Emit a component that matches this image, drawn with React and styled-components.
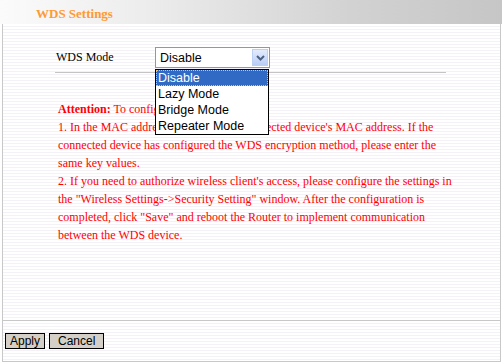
import React from "react";
import styled, { createGlobalStyle } from "styled-components";

const GlobalStyle = createGlobalStyle`
  html, body {
    margin: 0;
    padding: 0;
    background: #ffffff;
  }
`;

const Page = styled.div`
  width: 502px;
  height: 363px;
  display: flex;
  flex-direction: column;
  font-family: "Liberation Serif", "Times New Roman", serif;
  position: relative;
  overflow: hidden;
`;

const Header = styled.div`
  height: 24px;
  flex: none;
  display: flex;
  align-items: center;
  padding-left: 36px;
  background: linear-gradient(to right, #fbfbfb 0%, #ececec 30%, #d2d2d2 70%, #c6c6c6 100%);
`;

const Title = styled.h1`
  margin: 0;
  font-size: 13px;
  font-weight: bold;
  color: #ff9a33;
  padding-top: 3px;
`;

const Panel = styled.div`
  flex: 1;
  margin: 0 1px 1px 2px;
  border-left: 1px solid #c8c8c8;
  border-right: 1px solid #c8c8c8;
  border-bottom: 1px solid #c8c8c8;
  display: flex;
  flex-direction: column;
  background: repeating-linear-gradient(to bottom, #ffffff 0 2px, #f4f2f6 2px 3px);
`;

const Content = styled.div`
  flex: 1;
  padding: 23px 0 0 52px;
`;

const Row = styled.div`
  width: 391px;
  height: 25px;
  display: flex;
  align-items: flex-start;
  border-bottom: 1px solid #c4c4c4;
`;

const Label = styled.span`
  width: 99px;
  font-size: 12px;
  color: #000;
  line-height: 21px;
  padding-left: 1px;
`;

const SelectWrap = styled.div`
  position: relative;
`;

const SelectBox = styled.div`
  width: 109px;
  height: 19px;
  border: 1px solid #7f9db9;
  background: #fff;
  display: flex;
  align-items: center;
  justify-content: space-between;
  font-family: "Liberation Sans", Arial, sans-serif;
  font-size: 12.5px;
  color: #000;
  padding-left: 4px;
  box-sizing: content-box;
`;

const ArrowBtn = styled.div`
  width: 16px;
  height: 17px;
  margin-right: 1px;
  border: 1px solid #bcd0f4;
  box-sizing: border-box;
  background: linear-gradient(to bottom, #e3ecfd, #b9cdf6);
  display: flex;
  align-items: center;
  justify-content: center;
`;

const List = styled.ul`
  position: absolute;
  top: 22px;
  left: 0;
  width: 112px;
  margin: 0;
  padding: 0;
  list-style: none;
  border: 1px solid #000;
  background: #fff;
  z-index: 2;
  font-family: "Liberation Sans", Arial, sans-serif;
  font-size: 12.5px;
`;

const Item = styled.li`
  height: 16px;
  line-height: 16px;
  padding-left: 2px;
  color: ${(p) => (p.$active ? "#fff" : "#000")};
  background: ${(p) => (p.$active ? "#316ac5" : "transparent")};
  outline: ${(p) => (p.$active ? "1px dotted #f5c26b" : "none")};
  outline-offset: -1px;
`;

const Notes = styled.div`
  margin-top: 27px;
  width: 400px;
  padding-left: 3px;
  color: #ff0000;
  font-size: 12px;
  line-height: 18px;
`;

const Para = styled.p`
  margin: 0;
`;

const Footer = styled.div`
  border-top: 1px solid #c8c8c8;
  height: 41px;
  flex: none;
  display: flex;
  align-items: flex-start;
  gap: 4px;
  padding: 12px 0 0 2px;
  box-sizing: border-box;
`;

const Button = styled.button`
  height: 16px;
  padding: 0 ${(p) => p.$pad}px;
  margin: 0;
  border: 1px solid #000;
  background: #d4d0c8;
  font-family: "Liberation Sans", Arial, sans-serif;
  font-size: 12px;
  line-height: 14px;
  color: #000;
  border-radius: 0;
`;

const options = ["Disable", "Lazy Mode", "Bridge Mode", "Repeater Mode"];

export default function App() {
  return (
    <Page>
      <GlobalStyle />
      <Header>
        <Title>WDS Settings</Title>
      </Header>
      <Panel>
        <Content>
          <Row>
            <Label>WDS Mode</Label>
            <SelectWrap>
              <SelectBox>
                Disable
                <ArrowBtn>
                  <svg width="9" height="6" viewBox="0 0 9 6">
                    <path d="M1 1 L4.5 4.5 L8 1" fill="none" stroke="#4d6185" strokeWidth="2" />
                  </svg>
                </ArrowBtn>
              </SelectBox>
              <List>
                {options.map((o, i) => (
                  <Item key={o} $active={i === 0}>
                    {o}
                  </Item>
                ))}
              </List>
            </SelectWrap>
          </Row>
          <Notes>
            <Para>
              <b>Attention:</b> To configure WDS:
            </Para>
            <Para>
              1. In the MAC address field, enter the connected device's MAC address. If the
              connected device has configured the WDS encryption method, please enter the
              same key values.
            </Para>
            <Para>
              2. If you need to authorize wireless client's access, please configure the settings in
              the "Wireless Settings-&gt;Security Setting" window. After the configuration is
              completed, click "Save" and reboot the Router to implement communication
              between the WDS device.
            </Para>
          </Notes>
        </Content>
        <Footer>
          <Button $pad={4}>Apply</Button>
          <Button $pad={8}>Cancel</Button>
        </Footer>
      </Panel>
    </Page>
  );
}
